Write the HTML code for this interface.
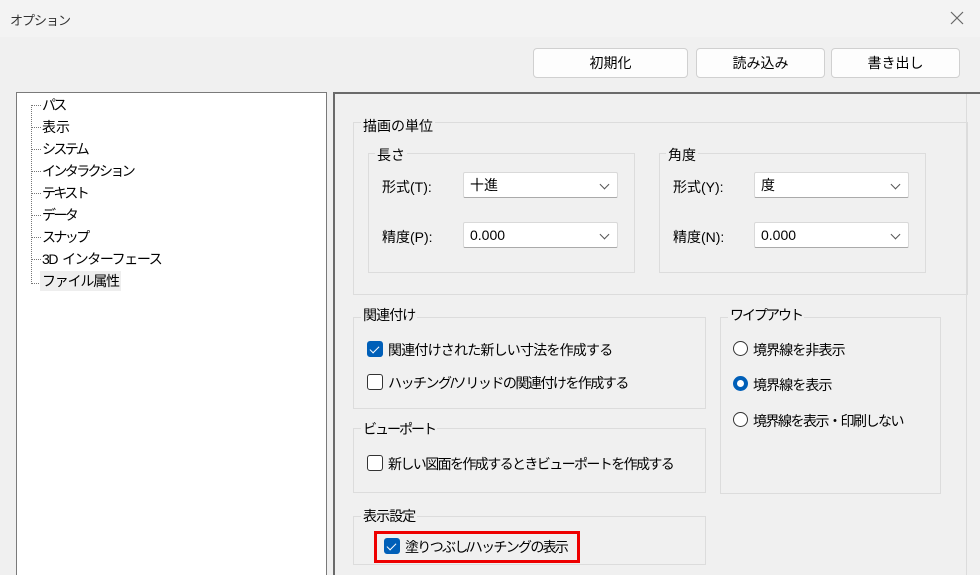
<!DOCTYPE html>
<html><head><meta charset="utf-8"><style>
*{box-sizing:border-box;margin:0;padding:0}
html,body{width:980px;height:575px;overflow:hidden}
body{background:#f0f0f0;font-family:"Liberation Sans","Noto Sans CJK JP",sans-serif;font-size:14px;letter-spacing:-0.9px;color:#000;position:relative}
.a{position:absolute;white-space:nowrap}
.title{left:0;top:0;width:980px;height:37px;background:#f3f3f3}
.btn{background:#fdfdfd;border:1px solid #d0d0d0;border-radius:4px;text-align:center;line-height:28px;height:30px;top:48px;font-size:14px;letter-spacing:0}
.grp{border:1px solid #dcdcdc}
.lbl{background:#f0f0f0;padding:0 2px;line-height:16px}
.combo{background:#fff;border:1px solid #d9d9d9;border-bottom:1px solid #aaa;border-radius:2px;height:26px;line-height:24px;padding-left:6px;font-size:14px;letter-spacing:0}
.combo:after{content:"";position:absolute;right:9px;top:8px;width:6px;height:6px;border-right:1px solid #555;border-bottom:1px solid #555;transform:rotate(45deg)}
.cb{width:16px;height:16px;border:1px solid #333;border-radius:3px;background:#fff}
.cb.on{background:#005fb8;border-color:#005fb8}
.cb.on:after{content:"";position:absolute;left:4px;top:2px;width:4px;height:8px;border-right:1.5px solid #fff;border-bottom:1.5px solid #fff;transform:rotate(45deg)}
.rd{width:15px;height:15px;border:1px solid #333;border-radius:50%;background:#fff}
.rd.on{border:4px solid #005fb8}
.ti{left:42px;line-height:18px;font-size:14px;letter-spacing:-2.6px}
.dh{left:32px;width:9px;border-top:1px dotted #777}
.k{letter-spacing:-2px}
</style></head><body>
<div class="a title"></div>
<div class="a" style="left:10px;top:10px;font-size:13px;color:#333;letter-spacing:-1px">オプション</div>
<svg class="a" style="left:950px;top:11px" width="14" height="14"><path d="M1 1L13 13M13 1L1 13" stroke="#666" stroke-width="1.2"/></svg>
<div class="a btn" style="left:533px;width:155px">初期化</div>
<div class="a btn" style="left:696px;width:129px">読み込み</div>
<div class="a btn" style="left:831px;width:129px">書き出し</div>

<div class="a" style="left:16px;top:92px;width:311px;height:490px;background:#fff;border:1px solid #7a7a7a"></div>
<div class="a" style="left:31px;top:105px;height:179px;border-left:1px dotted #777"></div>
<div class="a dh" style="top:105px"></div><div class="a ti" style="top:96px">パス</div>
<div class="a dh" style="top:127px"></div><div class="a ti" style="top:118px;letter-spacing:0">表示</div>
<div class="a dh" style="top:149px"></div><div class="a ti" style="top:140px">システム</div>
<div class="a dh" style="top:171px"></div><div class="a ti" style="top:162px">インタラクション</div>
<div class="a dh" style="top:193px"></div><div class="a ti" style="top:184px">テキスト</div>
<div class="a dh" style="top:215px"></div><div class="a ti" style="top:206px">データ</div>
<div class="a dh" style="top:237px"></div><div class="a ti" style="top:228px">スナップ</div>
<div class="a dh" style="top:259px"></div><div class="a ti" style="top:250px;letter-spacing:-1.4px">3D&nbsp; インターフェース</div>
<div class="a dh" style="top:283px"></div><div class="a ti" style="top:271px;left:40px;background:#eee;padding:1px 2px;letter-spacing:-1.2px">ファイル属性</div>

<div class="a" style="left:333px;top:92px;width:660px;height:500px;border-top:2px solid #6a6a6a;border-left:2px solid #6a6a6a"></div>
<div class="a" style="left:966px;top:94px;height:481px;border-left:1px solid #dcdcdc"></div>

<div class="a grp" style="left:353px;top:122px;width:615px;height:173px"></div>
<div class="a lbl" style="left:361px;top:118px;letter-spacing:0">描画の単位</div>
<div class="a grp" style="left:368px;top:153px;width:267px;height:120px"></div>
<div class="a lbl" style="left:375px;top:147px;letter-spacing:0">長さ</div>
<div class="a" style="left:382px;top:177px;letter-spacing:0">形式(T):</div>
<div class="a combo" style="left:463px;top:172px;width:155px">十進</div>
<div class="a" style="left:382px;top:227px;letter-spacing:0">精度(P):</div>
<div class="a combo" style="left:463px;top:222px;width:155px">0.000</div>
<div class="a grp" style="left:659px;top:153px;width:267px;height:120px"></div>
<div class="a lbl" style="left:666px;top:147px;letter-spacing:0">角度</div>
<div class="a" style="left:673px;top:177px;letter-spacing:0">形式(Y):</div>
<div class="a combo" style="left:754px;top:172px;width:155px">度</div>
<div class="a" style="left:673px;top:227px;letter-spacing:0">精度(N):</div>
<div class="a combo" style="left:754px;top:222px;width:155px">0.000</div>

<div class="a grp" style="left:353px;top:317px;width:353px;height:92px"></div>
<div class="a lbl" style="left:361px;top:307px">関連付け</div>
<div class="a cb on" style="left:367px;top:341px"></div><div class="a" style="left:388px;top:340px;letter-spacing:-0.8px">関連付けされた新しい寸法を作成する</div>
<div class="a cb" style="left:367px;top:374px"></div><div class="a" style="left:388px;top:373px;letter-spacing:-1.5px">ハッチング/ソリッドの関連付けを作成する</div>

<div class="a grp" style="left:720px;top:317px;width:221px;height:177px"></div>
<div class="a lbl k" style="left:728px;top:307px">ワイプアウト</div>
<div class="a rd" style="left:733px;top:341px"></div><div class="a" style="left:753px;top:340px">境界線を非表示</div>
<div class="a rd on" style="left:733px;top:376px"></div><div class="a" style="left:753px;top:375px">境界線を表示</div>
<div class="a rd" style="left:733px;top:412px"></div><div class="a" style="left:753px;top:411px;letter-spacing:-1.5px">境界線を表示・印刷しない</div>

<div class="a grp" style="left:353px;top:428px;width:353px;height:65px"></div>
<div class="a lbl k" style="left:361px;top:421px">ビューポート</div>
<div class="a cb" style="left:367px;top:455px"></div><div class="a" style="left:388px;top:454px;letter-spacing:-1.6px">新しい図面を作成するときビューポートを作成する</div>

<div class="a grp" style="left:353px;top:516px;width:353px;height:49px"></div>
<div class="a lbl" style="left:361px;top:508px">表示設定</div>
<div class="a" style="left:374px;top:531px;width:206px;height:32px;border:3px solid #e00;background:#f0f0f0"></div>
<div class="a cb on" style="left:384px;top:538px"></div><div class="a" style="left:405px;top:537px;letter-spacing:-1.7px">塗りつぶし/ハッチングの表示</div>
</body></html>
